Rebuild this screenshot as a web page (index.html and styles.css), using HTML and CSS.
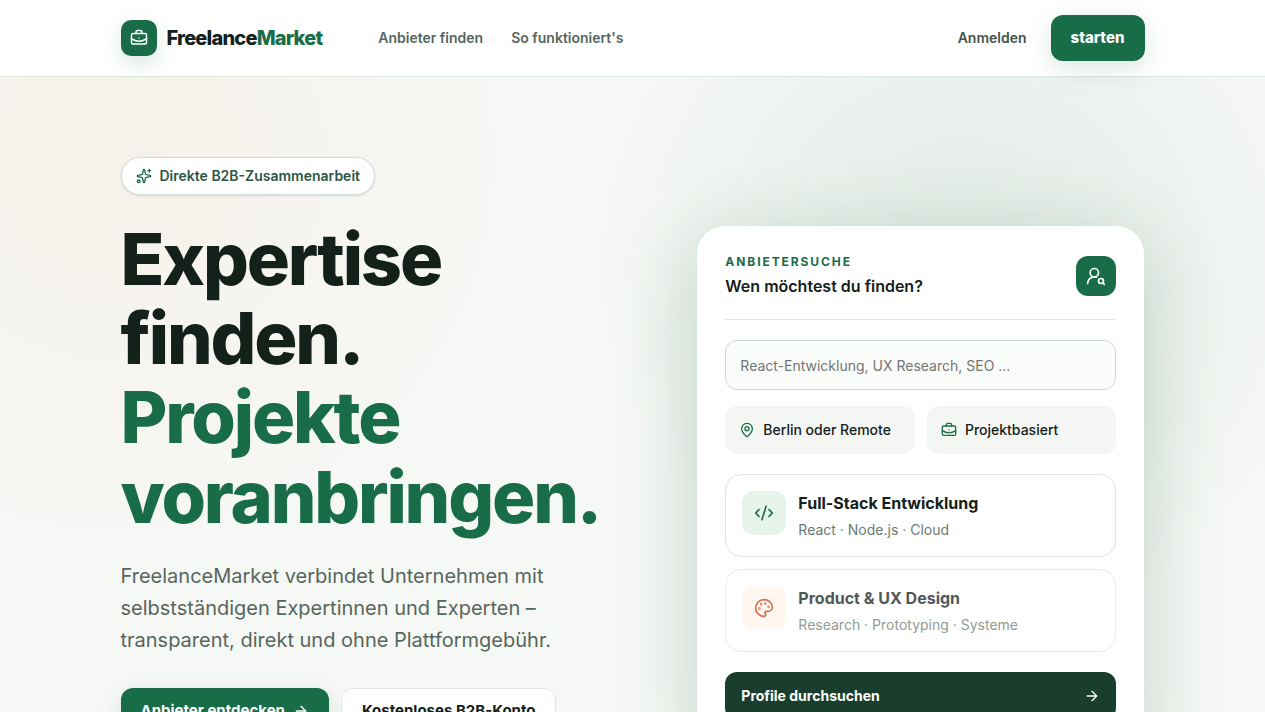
FILE: index.html
```html
<!DOCTYPE html>
<html lang="de">
<head>
    <meta charset="UTF-8">
    <meta name="viewport" content="width=device-width, initial-scale=1.0">
    <title>FreelanceMarket</title>
    <link rel="stylesheet" href="styles.css">
</head>
<body>
    <header class="header">
        <div class="container header-inner">
            <a class="brand" href="#">
                <span class="brand-mark">
                    <svg class="icon icon-md" viewBox="0 0 24 24"><path d="M12 12h.01"/><path d="M16 6V4a2 2 0 0 0-2-2h-4a2 2 0 0 0-2 2v2"/><path d="M22 13a18.15 18.15 0 0 1-20 0"/><rect width="20" height="14" x="2" y="6" rx="2"/></svg>
                </span>
                <span>Freelance<span class="green">Market</span></span>
            </a>
            <nav class="nav">
                <a href="#anbieter">Anbieter finden</a>
                <a href="#ablauf">So funktioniert's</a>
            </nav>
            <div class="account">
                <a class="login" href="#login">Anmelden</a>
                <a class="button button-green button-start" href="#start">starten</a>
            </div>
        </div>
    </header>

    <main class="hero">
        <div class="container hero-grid">
            <section>
                <p class="badge">
                    <svg class="icon" viewBox="0 0 24 24"><path d="M11.017 2.814a1 1 0 0 1 1.966 0l1.051 5.558a2 2 0 0 0 1.594 1.594l5.558 1.051a1 1 0 0 1 0 1.966l-5.558 1.051a2 2 0 0 0-1.594 1.594l-1.051 5.558a1 1 0 0 1-1.966 0l-1.051-5.558a2 2 0 0 0-1.594-1.594l-5.558-1.051a1 1 0 0 1 0-1.966l5.558-1.051a2 2 0 0 0 1.594-1.594z"/><path d="M20 2v4"/><path d="M22 4h-4"/><circle cx="4" cy="20" r="2"/></svg>
                    Direkte B2B-Zusammenarbeit
                </p>
                <h1 class="title">Expertise finden. <span class="green">Projekte voranbringen.</span></h1>
                <p class="lead">FreelanceMarket verbindet Unternehmen mit selbstständigen Expertinnen und Experten – transparent, direkt und ohne Plattformgebühr.</p>
                <div class="actions">
                    <a class="button button-green" href="#anbieter">
                        Anbieter entdecken
                        <svg class="icon" viewBox="0 0 24 24"><path d="M5 12h14"/><path d="m12 5 7 7-7 7"/></svg>
                    </a>
                    <a class="button button-white" href="#konto">Kostenloses B2B-Konto</a>
                </div>
            </section>

            <form class="card">
                <div class="card-head">
                    <div>
                        <p class="eyebrow">Anbietersuche</p>
                        <label class="card-title" for="search">Wen möchtest du finden?</label>
                    </div>
                    <span class="card-mark">
                        <svg class="icon icon-lg" viewBox="0 0 24 24"><circle cx="10" cy="8" r="5"/><path d="M2 21a8 8 0 0 1 10.434-7.62"/><circle cx="18" cy="18" r="3"/><path d="m22 22-1.900-1.900"/></svg>
                    </span>
                </div>
                <input class="search" id="search" type="text" placeholder="React-Entwicklung, UX Research, SEO ...">
                <div class="filters">
                    <div class="filter">
                        <svg class="icon" viewBox="0 0 24 24"><path d="M20 10c0 4.993-5.539 10.193-7.399 11.799a1 1 0 0 1-1.202 0C9.539 20.193 4 14.993 4 10a8 8 0 0 1 16 0"/><circle cx="12" cy="10" r="3"/></svg>
                        Berlin oder Remote
                    </div>
                    <div class="filter">
                        <svg class="icon" viewBox="0 0 24 24"><path d="M12 12h.01"/><path d="M16 6V4a2 2 0 0 0-2-2h-4a2 2 0 0 0-2 2v2"/><path d="M22 13a18.15 18.15 0 0 1-20 0"/><rect width="20" height="14" x="2" y="6" rx="2"/></svg>
                        Projektbasiert
                    </div>
                </div>
                <div class="results">
                    <article class="result">
                        <span class="result-mark">
                            <svg class="icon icon-lg" viewBox="0 0 24 24"><path d="m18 16 4-4-4-4"/><path d="m6 8-4 4 4 4"/><path d="m14.500 4-5 16"/></svg>
                        </span>
                        <div>
                            <h2 class="result-title">Full-Stack Entwicklung</h2>
                            <p class="result-text">React · Node.js · Cloud</p>
                        </div>
                    </article>
                    <article class="result result-faded">
                        <span class="result-mark result-mark-orange">
                            <svg class="icon icon-lg" viewBox="0 0 24 24"><path d="M12 22a1 1 0 0 1 0-20 10 9 0 0 1 10 9 5 5 0 0 1-5 5h-2.250a1.750 1.750 0 0 0-1.400 2.800l.3.4a1.750 1.750 0 0 1-1.400 2.800z"/><circle cx="13.500" cy="6.500" r=".5"/><circle cx="17.500" cy="10.500" r=".5"/><circle cx="6.500" cy="12.500" r=".5"/><circle cx="8.500" cy="7.500" r=".5"/></svg>
                        </span>
                        <div>
                            <h2 class="result-title">Product &amp; UX Design</h2>
                            <p class="result-text">Research · Prototyping · Systeme</p>
                        </div>
                    </article>
                </div>
                <button class="submit" type="submit">
                    Profile durchsuchen
                    <svg class="icon" viewBox="0 0 24 24"><path d="M5 12h14"/><path d="m12 5 7 7-7 7"/></svg>
                </button>
            </form>
        </div>
    </main>
</body>
</html>
```
FILE: styles.css
```css
* {
    box-sizing: border-box;
}
body {
    margin: 0;
    font-family: Inter, sans-serif;
    font-size: 14px;
    line-height: 20px;
    color: #14211b;
    background: #f6f8f5;
}
h1, h2, p {
    margin: 0;
}
a {
    color: inherit;
    text-decoration: none;
}
.container {
    max-width: 1024px;
    margin: 0 auto;
}
.icon {
    width: 16px;
    height: 16px;
    flex-shrink: 0;
    fill: none;
    stroke: currentColor;
    stroke-width: 2;
    stroke-linecap: round;
    stroke-linejoin: round;
}
.icon-md {
    width: 18px;
    height: 18px;
}
.icon-lg {
    width: 20px;
    height: 20px;
}
.green {
    color: #196c48;
}

/* header */
.header {
    position: relative;
    z-index: 1;
    background: #fff;
    border-bottom: 1px solid #dfe8e3;
}
.header-inner {
    display: flex;
    align-items: center;
    height: 76px;
}
.brand {
    display: flex;
    align-items: center;
    gap: 10px;
    font-size: 20px;
    font-weight: 800;
    letter-spacing: -0.04em;
}
.brand-mark {
    display: grid;
    place-items: center;
    width: 36px;
    height: 36px;
    border-radius: 10px;
    color: #fff;
    background: #196c48;
    box-shadow: 0 8px 20px rgba(25, 108, 72, 0.16);
}
.nav {
    display: flex;
    gap: 28px;
    margin-left: 56px;
    font-weight: 600;
    color: #56665e;
}
.account {
    display: flex;
    align-items: center;
    gap: 24px;
    margin-left: auto;
}
.login {
    font-weight: 600;
    color: #43534b;
}

/* buttons */
.button {
    display: inline-flex;
    align-items: center;
    gap: 8px;
    height: 46px;
    padding: 0 20px;
    border-radius: 12px;
    font-size: 15px;
    font-weight: 700;
}
.button-green {
    color: #fff;
    background: #196c48;
    box-shadow: 0 8px 24px rgba(25, 108, 72, 0.16);
}
.button-start {
    font-weight: 800;
}
.button-white {
    border: 1px solid #dfe6e2;
    background: #fff;
}

/* hero */
.hero {
    padding: 80px 0;
    background:
        radial-gradient(circle 400px at 120px 80px, rgba(247, 235, 224, 0.5), transparent),
        radial-gradient(circle 370px at 76% 190px, rgba(210, 225, 217, 0.6), transparent);
}
.hero-grid {
    display: grid;
    grid-template-columns: 1fr 0.9fr;
    gap: 80px;
    align-items: start;
}
.badge {
    display: inline-flex;
    align-items: center;
    gap: 8px;
    height: 38px;
    padding: 0 14px;
    border: 1px solid #cfe2d7;
    border-radius: 19px;
    font-weight: 600;
    color: #2c5643;
    background: #fff;
    box-shadow: 0 1px 3px rgba(20, 33, 27, 0.12);
}
.badge .icon {
    color: #196c48;
}
.title {
    margin-top: 24px;
    font-size: 72px;
    font-weight: 800;
    line-height: 1.1;
    letter-spacing: -0.03em;
}
.title .green {
    display: block;
}
.lead {
    margin-top: 24px;
    font-size: 20px;
    line-height: 32px;
    color: #56665e;
}
.actions {
    display: flex;
    gap: 12px;
    margin-top: 32px;
}

/* search card */
.card {
    margin-top: 69px;
    padding: 28px;
    border-radius: 28px;
    background: #fff;
    box-shadow: 0 20px 80px rgba(25, 90, 60, 0.24);
}
.card-head {
    display: flex;
    align-items: center;
    justify-content: space-between;
    padding-bottom: 21px;
    border-bottom: 1px solid #e3ebe6;
}
.eyebrow {
    font-size: 12px;
    font-weight: 700;
    line-height: 16px;
    letter-spacing: 0.16em;
    text-transform: uppercase;
    color: #196c48;
}
.card-title {
    display: block;
    margin-top: 4px;
    font-size: 16px;
    font-weight: 600;
    line-height: 24px;
}
.card-mark {
    display: grid;
    place-items: center;
    width: 40px;
    height: 40px;
    border-radius: 12px;
    color: #fff;
    background: #196c48;
}
.search {
    display: block;
    width: 100%;
    height: 50px;
    margin-top: 20px;
    padding: 0 14px;
    border: 1px solid #cddbd3;
    border-radius: 12px;
    font: inherit;
    background: #fafcf9;
}
.search::placeholder {
    color: #757575;
}
.filters {
    display: grid;
    grid-template-columns: 1fr 1fr;
    gap: 12px;
    margin-top: 16px;
}
.filter {
    display: flex;
    align-items: center;
    gap: 8px;
    height: 48px;
    padding: 0 14px;
    border-radius: 12px;
    font-weight: 500;
    background: #f3f6f3;
}
.filter .icon {
    color: #196c48;
}
.results {
    display: grid;
    gap: 12px;
    margin-top: 20px;
}
.result {
    display: flex;
    gap: 12px;
    padding: 16px;
    border: 1px solid #dfe6e2;
    border-radius: 16px;
}
.result-faded {
    opacity: 0.75;
}
.result-mark {
    display: grid;
    place-items: center;
    width: 44px;
    height: 44px;
    border-radius: 12px;
    color: #196c48;
    background: #e6f4ec;
}
.result-mark-orange {
    color: #cc4214;
    background: #fff5ec;
}
.result-title {
    font-size: 16px;
    font-weight: 700;
    line-height: 24px;
}
.result-text {
    margin-top: 5px;
    color: #6b7a72;
}
.submit {
    display: flex;
    align-items: center;
    justify-content: space-between;
    width: 100%;
    height: 48px;
    margin-top: 20px;
    padding: 0 16px;
    border: 0;
    border-radius: 12px;
    font: inherit;
    font-weight: 700;
    color: #fff;
    background: #193e2d;
}
```
